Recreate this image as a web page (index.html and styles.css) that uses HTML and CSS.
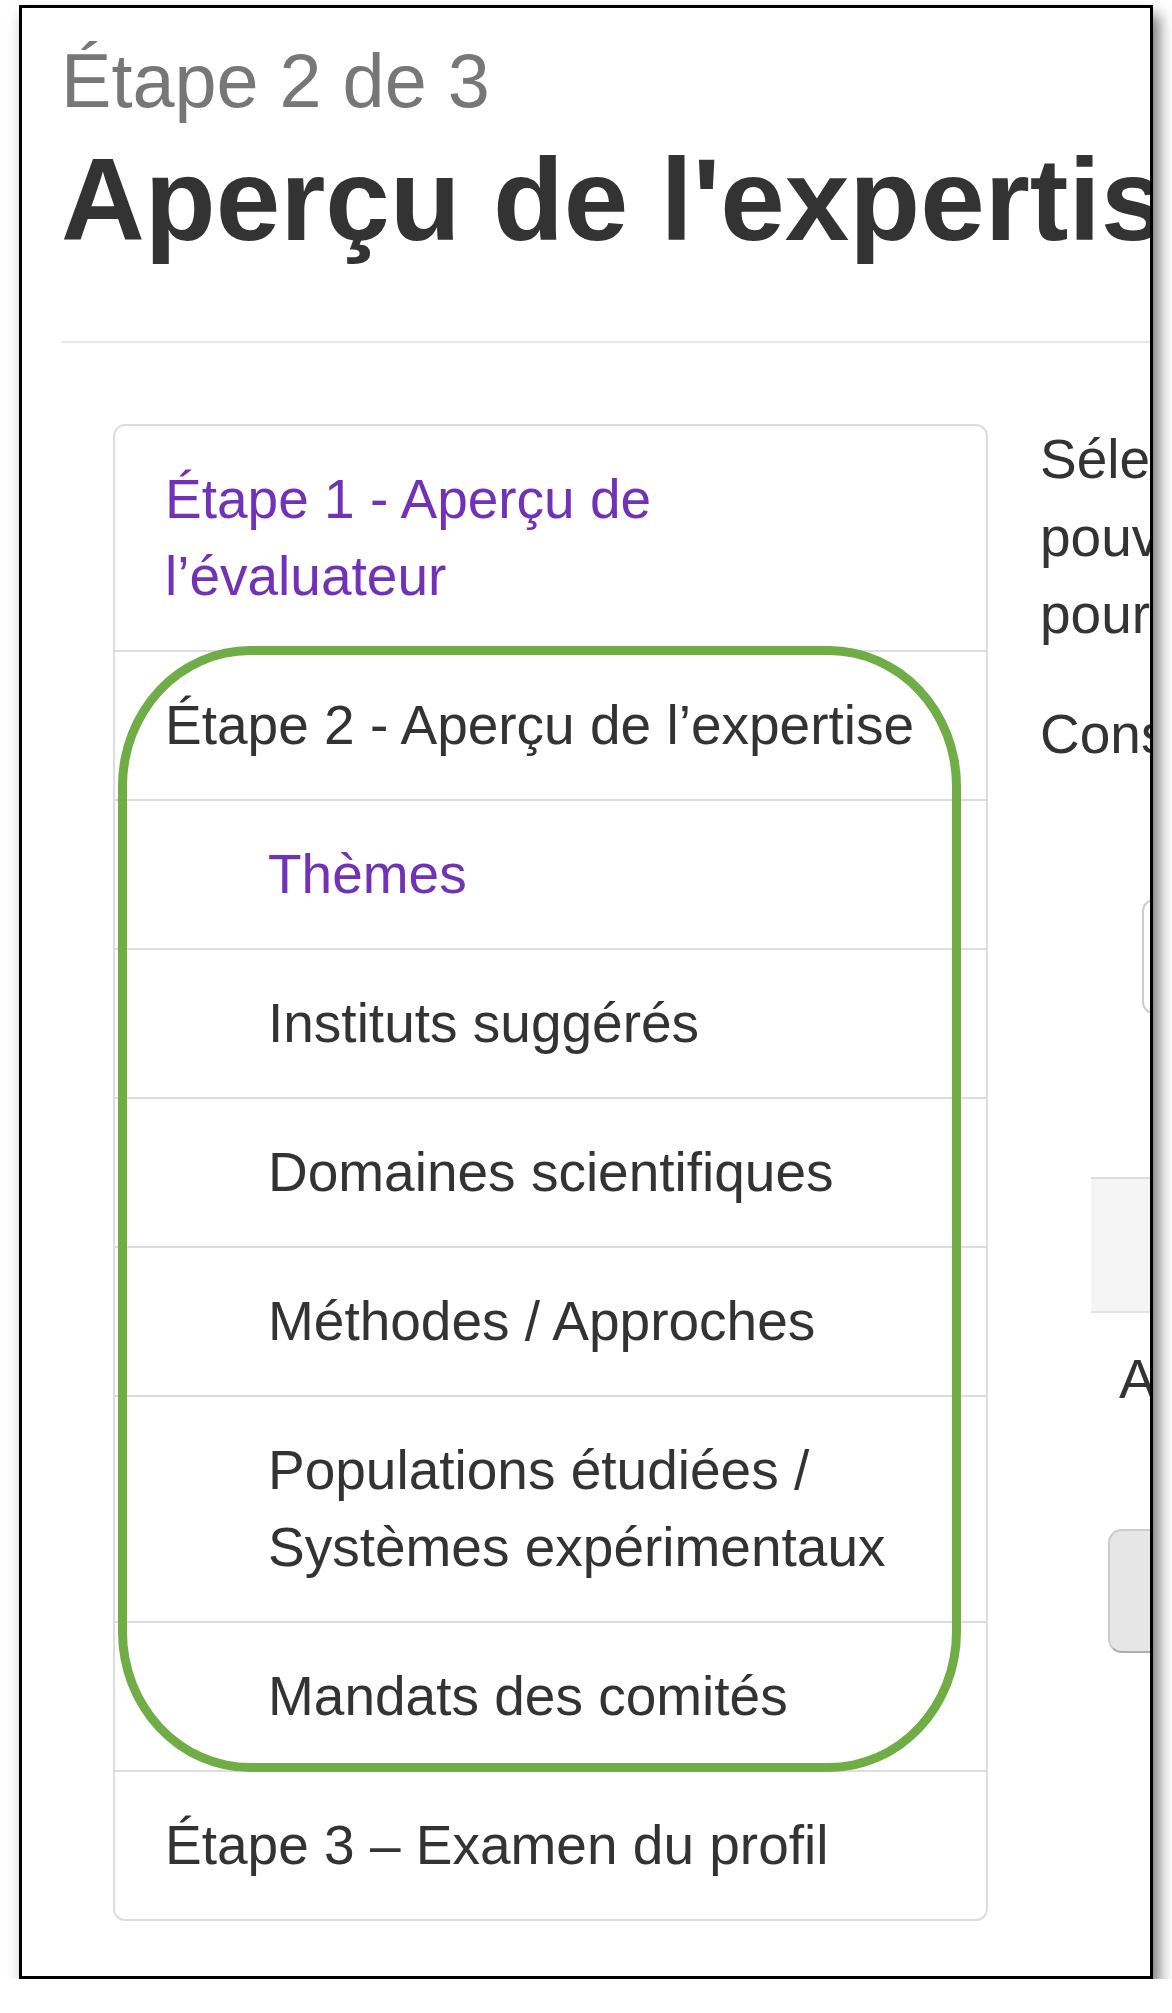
FILE: index.html
```html
<!DOCTYPE html>
<html lang="fr">
<head>
<meta charset="utf-8">
<title>Aperçu de l'expertise</title>
<link rel="stylesheet" href="styles.css">
</head>
<body>
<div class="frame">
  <div class="page">
    <div class="step-label">Étape 2 de 3</div>
    <h1 class="title">Aperçu de l'expertise</h1>
    <hr class="rule">
    <div class="layout">
      <nav class="steps">
        <a class="step visited">Étape 1 - Aperçu de l’évaluateur</a>
        <a class="step">Étape 2 - Aperçu de l’expertise</a>
        <a class="step sub visited">Thèmes</a>
        <a class="step sub">Instituts suggérés</a>
        <a class="step sub">Domaines scientifiques</a>
        <a class="step sub">Méthodes / Approches</a>
        <a class="step sub">Populations étudiées / Systèmes expérimentaux</a>
        <a class="step sub">Mandats des comités</a>
        <a class="step">Étape 3 – Examen du profil</a>
      </nav>
      <section class="content">
        <p class="intro">Sélectionnez les thèmes qui correspondent à votre expertise. Vous<br>pouvez sélectionner autant de thèmes que nécessaire<br>pour décrire votre expertise.</p>
        <p class="intro last">Consultez la liste des thèmes ci-dessous.</p>
        <div class="search"></div>
        <div class="panel"></div>
        <div class="letter">Aucun thème sélectionné</div>
        <div class="btn">Ajouter</div>
      </section>
    </div>
  </div>
  <div class="highlight"></div>
</div>
</body>
</html>
```
FILE: styles.css
```css
* {
  box-sizing: border-box;
}

body {
  margin: 0;
  background: #fff;
  font-family: "Liberation Sans", Arial, sans-serif;
}

.frame {
  position: relative;
  margin: 5px 0 0 19px;
  width: 1134px;
  height: 1974px;
  border: 3px solid #000;
  overflow: hidden;
  background: #fff;
  box-shadow: 6px 10px 14px rgba(0, 0, 0, 0.55);
}

.page {
  padding: 31px 0 0 39px;
}

.step-label {
  font-size: 75.6px;
  line-height: 84px;
  color: #777;
  white-space: nowrap;
}

.title {
  margin: 13px 0 0;
  font-size: 116px;
  line-height: 128px;
  font-weight: 700;
  color: #333;
  white-space: nowrap;
}

.rule {
  margin: 77px 0 0;
  height: 0;
  border: 0;
  border-top: 2px solid #e8e8e8;
}

.layout {
  display: flex;
  align-items: flex-start;
  gap: 52px;
  margin-top: 81px;
  margin-left: 52px;
}

.steps {
  flex: none;
  width: 875px;
  border: 2px solid #ddd;
  border-radius: 12px;
}

.step {
  display: block;
  padding: 35px 50px 35px 50px;
  font-size: 55px;
  line-height: 77px;
  color: #333;
  text-decoration: none;
}

.step + .step {
  border-top: 2px solid #ddd;
}

.step.sub {
  padding-left: 153px;
}

.step.visited {
  color: #7232b8;
}

.content {
  flex: none;
  width: 1400px;
  margin-top: -3px;
  font-size: 55px;
  line-height: 77.5px;
  color: #333;
}

.intro {
  margin: 0 0 42px;
  white-space: nowrap;
}

.intro.last {
  margin-bottom: 0;
}

.search {
  margin: 126px 0 0 102px;
  height: 115px;
  border: 2px solid #ccc;
  border-radius: 12px;
  background: #fff;
}

.panel {
  margin: 163px 0 0 51px;
  height: 136px;
  background: #f5f5f5;
  border-top: 2px solid #ddd;
  border-bottom: 2px solid #e5e5e5;
}

.letter {
  margin: 28px 0 0 79px;
  white-space: nowrap;
}

.btn {
  margin: 110px 0 0 68px;
  width: 320px;
  height: 124px;
  padding-left: 80px;
  line-height: 120px;
  background: #e6e6e6;
  border: 2px solid #ccc;
  border-bottom-color: #adadad;
  border-radius: 14px;
}

.highlight {
  position: absolute;
  left: 96px;
  top: 638px;
  width: 843px;
  height: 1126px;
  border: 9px solid #70ad47;
  border-radius: 132px / 140px;
  pointer-events: none;
}
```
